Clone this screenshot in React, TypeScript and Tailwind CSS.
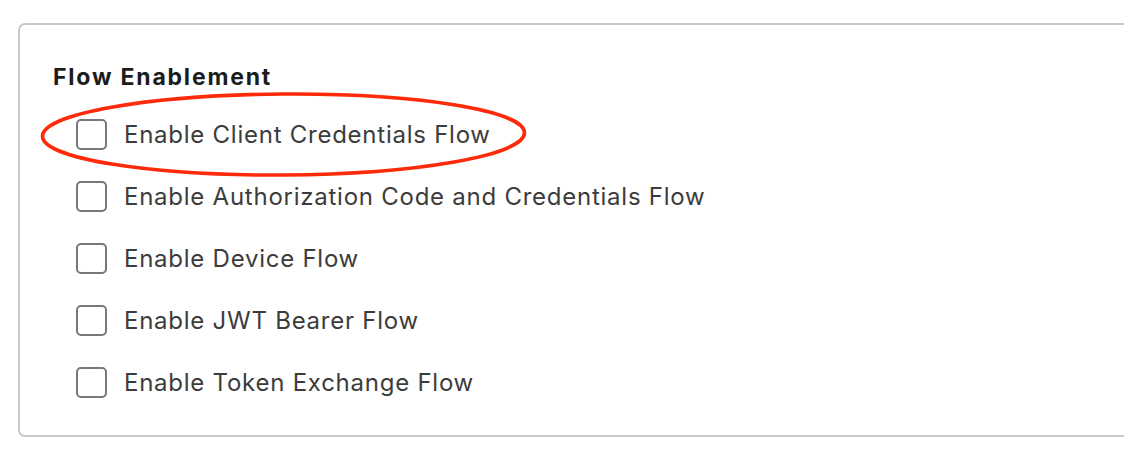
import React from "react";

const flows = [
  "Enable Client Credentials Flow",
  "Enable Authorization Code and Credentials Flow",
  "Enable Device Flow",
  "Enable JWT Bearer Flow",
  "Enable Token Exchange Flow",
];

export default function App() {
  return (
    <div
      className="relative w-[1124px] h-[460px] overflow-hidden bg-white"
      style={{ fontFamily: "Inter, 'Noto Sans', sans-serif" }}
    >
      <div className="pt-[23px] pl-[18px]">
        <div className="w-[1130px] h-[414px] border-2 border-[#c9c9c9] rounded-[7px] pt-[38px] pl-[33px]">
          <h2 className="text-[23px] leading-[28px] font-bold text-[#1c1c1c] tracking-[1.8px]">
            Flow Enablement
          </h2>
          <div className="mt-[12px] flex flex-col pl-[23px]">
            {flows.map((f) => (
              <label key={f} className="flex items-center h-[62px] gap-[17px]">
                <span className="w-[31px] h-[31px] shrink-0 rounded-[5px] border-2 border-[#787878] bg-white" />
                <span className="text-[24px] leading-[28px] pt-[2px] text-[#3c3c3c] tracking-[0.75px]">{f}</span>
              </label>
            ))}
          </div>
        </div>
      </div>
      <svg
        className="absolute left-0 top-0 pointer-events-none"
        width="1124"
        height="460"
        viewBox="0 0 1124 460"
      >
        <ellipse
          cx="283.5"
          cy="134.5"
          rx="241"
          ry="40.5"
          fill="none"
          stroke="#ff2a0a"
          strokeWidth="3.6"
          transform="rotate(-0.4 283.5 134.5)"
        />
      </svg>
    </div>
  );
}
